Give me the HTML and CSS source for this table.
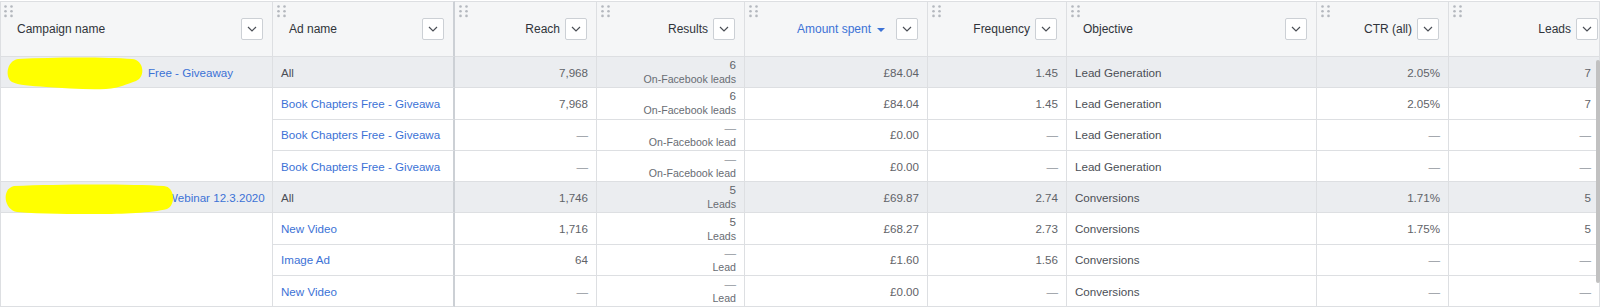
FILE: index.html
```html
<!DOCTYPE html>
<html lang="en">
<head>
<meta charset="utf-8">
<title>Ads report</title>
<link rel="stylesheet" href="styles.css">
</head>
<body>
<div class="wrap">
  <div class="grid">
    <!-- header -->
    <div class="hc left first">
      <svg class="grip" width="10" height="13" viewBox="0 0 10 13"><g fill="#b4b8be"><circle cx="1.5" cy="1.5" r="1.3"/><circle cx="7.5" cy="1.5" r="1.3"/><circle cx="1.5" cy="6.2" r="1.3"/><circle cx="7.5" cy="6.2" r="1.3"/><circle cx="1.5" cy="10.9" r="1.3"/><circle cx="7.5" cy="10.9" r="1.3"/></g></svg>
      <span class="lbl">Campaign name</span>
      <span class="dd"><svg width="10" height="6" viewBox="0 0 10 6"><path d="M1 1l4 4 4-4" fill="none" stroke="#4b4f56" stroke-width="1.2"/></svg></span>
    </div>
    <div class="hc left split">
      <svg class="grip" width="10" height="13" viewBox="0 0 10 13"><g fill="#b4b8be"><circle cx="1.5" cy="1.5" r="1.3"/><circle cx="7.5" cy="1.5" r="1.3"/><circle cx="1.5" cy="6.2" r="1.3"/><circle cx="7.5" cy="6.2" r="1.3"/><circle cx="1.5" cy="10.9" r="1.3"/><circle cx="7.5" cy="10.9" r="1.3"/></g></svg>
      <span class="lbl">Ad name</span>
      <span class="dd"><svg width="10" height="6" viewBox="0 0 10 6"><path d="M1 1l4 4 4-4" fill="none" stroke="#4b4f56" stroke-width="1.2"/></svg></span>
    </div>
    <div class="hc num">
      <svg class="grip" width="10" height="13" viewBox="0 0 10 13"><g fill="#b4b8be"><circle cx="1.5" cy="1.5" r="1.3"/><circle cx="7.5" cy="1.5" r="1.3"/><circle cx="1.5" cy="6.2" r="1.3"/><circle cx="7.5" cy="6.2" r="1.3"/><circle cx="1.5" cy="10.9" r="1.3"/><circle cx="7.5" cy="10.9" r="1.3"/></g></svg>
      <span class="lbl">Reach</span>
      <span class="dd"><svg width="10" height="6" viewBox="0 0 10 6"><path d="M1 1l4 4 4-4" fill="none" stroke="#4b4f56" stroke-width="1.2"/></svg></span>
    </div>
    <div class="hc num">
      <svg class="grip" width="10" height="13" viewBox="0 0 10 13"><g fill="#b4b8be"><circle cx="1.5" cy="1.5" r="1.3"/><circle cx="7.5" cy="1.5" r="1.3"/><circle cx="1.5" cy="6.2" r="1.3"/><circle cx="7.5" cy="6.2" r="1.3"/><circle cx="1.5" cy="10.9" r="1.3"/><circle cx="7.5" cy="10.9" r="1.3"/></g></svg>
      <span class="lbl">Results</span>
      <span class="dd"><svg width="10" height="6" viewBox="0 0 10 6"><path d="M1 1l4 4 4-4" fill="none" stroke="#4b4f56" stroke-width="1.2"/></svg></span>
    </div>
    <div class="hc num">
      <svg class="grip" width="10" height="13" viewBox="0 0 10 13"><g fill="#b4b8be"><circle cx="1.5" cy="1.5" r="1.3"/><circle cx="7.5" cy="1.5" r="1.3"/><circle cx="1.5" cy="6.2" r="1.3"/><circle cx="7.5" cy="6.2" r="1.3"/><circle cx="1.5" cy="10.9" r="1.3"/><circle cx="7.5" cy="10.9" r="1.3"/></g></svg>
      <span class="lbl sorted">Amount spent</span>
      <span class="sort-arrow"></span>
      <span class="dd"><svg width="10" height="6" viewBox="0 0 10 6"><path d="M1 1l4 4 4-4" fill="none" stroke="#4b4f56" stroke-width="1.2"/></svg></span>
    </div>
    <div class="hc num">
      <svg class="grip" width="10" height="13" viewBox="0 0 10 13"><g fill="#b4b8be"><circle cx="1.5" cy="1.5" r="1.3"/><circle cx="7.5" cy="1.5" r="1.3"/><circle cx="1.5" cy="6.2" r="1.3"/><circle cx="7.5" cy="6.2" r="1.3"/><circle cx="1.5" cy="10.9" r="1.3"/><circle cx="7.5" cy="10.9" r="1.3"/></g></svg>
      <span class="lbl">Frequency</span>
      <span class="dd"><svg width="10" height="6" viewBox="0 0 10 6"><path d="M1 1l4 4 4-4" fill="none" stroke="#4b4f56" stroke-width="1.2"/></svg></span>
    </div>
    <div class="hc left">
      <svg class="grip" width="10" height="13" viewBox="0 0 10 13"><g fill="#b4b8be"><circle cx="1.5" cy="1.5" r="1.3"/><circle cx="7.5" cy="1.5" r="1.3"/><circle cx="1.5" cy="6.2" r="1.3"/><circle cx="7.5" cy="6.2" r="1.3"/><circle cx="1.5" cy="10.9" r="1.3"/><circle cx="7.5" cy="10.9" r="1.3"/></g></svg>
      <span class="lbl">Objective</span>
      <span class="dd"><svg width="10" height="6" viewBox="0 0 10 6"><path d="M1 1l4 4 4-4" fill="none" stroke="#4b4f56" stroke-width="1.2"/></svg></span>
    </div>
    <div class="hc num">
      <svg class="grip" width="10" height="13" viewBox="0 0 10 13"><g fill="#b4b8be"><circle cx="1.5" cy="1.5" r="1.3"/><circle cx="7.5" cy="1.5" r="1.3"/><circle cx="1.5" cy="6.2" r="1.3"/><circle cx="7.5" cy="6.2" r="1.3"/><circle cx="1.5" cy="10.9" r="1.3"/><circle cx="7.5" cy="10.9" r="1.3"/></g></svg>
      <span class="lbl">CTR (all)</span>
      <span class="dd"><svg width="10" height="6" viewBox="0 0 10 6"><path d="M1 1l4 4 4-4" fill="none" stroke="#4b4f56" stroke-width="1.2"/></svg></span>
    </div>
    <div class="hc num last">
      <svg class="grip" width="10" height="13" viewBox="0 0 10 13"><g fill="#b4b8be"><circle cx="1.5" cy="1.5" r="1.3"/><circle cx="7.5" cy="1.5" r="1.3"/><circle cx="1.5" cy="6.2" r="1.3"/><circle cx="7.5" cy="6.2" r="1.3"/><circle cx="1.5" cy="10.9" r="1.3"/><circle cx="7.5" cy="10.9" r="1.3"/></g></svg>
      <span class="lbl">Leads</span>
      <span class="dd"><svg width="10" height="6" viewBox="0 0 10 6"><path d="M1 1l4 4 4-4" fill="none" stroke="#4b4f56" stroke-width="1.2"/></svg></span>
    </div>

    <!-- campaign 1 summary -->
    <div class="c g first camp camp-a">
      <span class="lk">Free - Giveaway</span>
      <svg class="blob blob-a" width="140" height="34" viewBox="0 0 140 34"><path d="M12 2C50 0 100 0 126 2C138 3 140 20 130 24C120 27 115 31 100 32C80 33 60 31 40 30C25 29 12 28 6 25C-1 21 0 4 12 2Z" fill="#ffff00"/></svg>
    </div>
    <div class="c g split">All</div>
    <div class="c g n">7,968</div>
    <div class="c g res"><span>6</span><span class="sub">On-Facebook leads</span></div>
    <div class="c g n">£84.04</div>
    <div class="c g n">1.45</div>
    <div class="c g">Lead Generation</div>
    <div class="c g n">2.05%</div>
    <div class="c g n">7</div>

    <div class="c first blank"></div>
    <div class="c split lk">Book Chapters Free - Giveawa</div>
    <div class="c n">7,968</div>
    <div class="c res"><span>6</span><span class="sub">On-Facebook leads</span></div>
    <div class="c n">£84.04</div>
    <div class="c n">1.45</div>
    <div class="c">Lead Generation</div>
    <div class="c n">2.05%</div>
    <div class="c n">7</div>

    <div class="c split lk">Book Chapters Free - Giveawa</div>
    <div class="c n dash">—</div>
    <div class="c res"><span class="dash">—</span><span class="sub">On-Facebook lead</span></div>
    <div class="c n">£0.00</div>
    <div class="c n dash">—</div>
    <div class="c">Lead Generation</div>
    <div class="c n dash">—</div>
    <div class="c n dash">—</div>

    <div class="c split lk">Book Chapters Free - Giveawa</div>
    <div class="c n dash">—</div>
    <div class="c res"><span class="dash">—</span><span class="sub">On-Facebook lead</span></div>
    <div class="c n">£0.00</div>
    <div class="c n dash">—</div>
    <div class="c">Lead Generation</div>
    <div class="c n dash">—</div>
    <div class="c n dash">—</div>

    <!-- campaign 2 summary -->
    <div class="c g first camp camp-b">
      <span class="lk">Webinar 12.3.2020</span>
      <svg class="blob blob-b" width="176" height="34" viewBox="0 0 176 34"><path d="M12 3C60 1 130 1 162 3C173 4 174 22 165 26C150 30 120 31 95 31C70 31 40 31 15 29C2 27-1 6 12 3Z" fill="#ffff00"/></svg>
    </div>
    <div class="c g split">All</div>
    <div class="c g n">1,746</div>
    <div class="c g res"><span>5</span><span class="sub">Leads</span></div>
    <div class="c g n">£69.87</div>
    <div class="c g n">2.74</div>
    <div class="c g">Conversions</div>
    <div class="c g n">1.71%</div>
    <div class="c g n">5</div>

    <div class="c first blank"></div>
    <div class="c split lk">New Video</div>
    <div class="c n">1,716</div>
    <div class="c res"><span>5</span><span class="sub">Leads</span></div>
    <div class="c n">£68.27</div>
    <div class="c n">2.73</div>
    <div class="c">Conversions</div>
    <div class="c n">1.75%</div>
    <div class="c n">5</div>

    <div class="c split lk">Image Ad</div>
    <div class="c n">64</div>
    <div class="c res"><span class="dash">—</span><span class="sub">Lead</span></div>
    <div class="c n">£1.60</div>
    <div class="c n">1.56</div>
    <div class="c">Conversions</div>
    <div class="c n dash">—</div>
    <div class="c n dash">—</div>

    <div class="c split lk">New Video</div>
    <div class="c n dash">—</div>
    <div class="c res"><span class="dash">—</span><span class="sub">Lead</span></div>
    <div class="c n">£0.00</div>
    <div class="c n dash">—</div>
    <div class="c">Conversions</div>
    <div class="c n dash">—</div>
    <div class="c n dash">—</div>
  </div>
  <div class="scroll-thumb"></div>
</div>
</body>
</html>
```

FILE: styles.css
```css
* { box-sizing: border-box; }

html, body {
  margin: 0;
  background: #ffffff;
}

body {
  padding-top: 1px;
  font-family: "Liberation Sans", Arial, sans-serif;
  font-size: 11.6px;
  color: #4b4f56;
}

.wrap {
  position: relative;
  width: 1600px;
  overflow: hidden;
}

.grid {
  display: grid;
  grid-template-columns: 273px 182px 142px 148px 183px 139px 250px 132px 151px;
  grid-template-rows: 56px repeat(8, 31.3px);
}

/* header cells */
.hc {
  position: relative;
  display: flex;
  align-items: center;
  gap: 5px;
  padding: 0 9px 0 16px;
  background: #f5f6f7;
  border-top: 1px solid #dddfe2;
  border-right: 1px solid #dddfe2;
  border-bottom: 1px solid #dddfe2;
  font-size: 12px;
  color: #30343a;
  white-space: nowrap;
}

.hc.num { justify-content: flex-end; }
.hc.left .dd { margin-left: auto; }
.hc.last { padding-right: 1px; }

.grip {
  position: absolute;
  top: 3px;
  left: 4px;
}

.first .grip { left: 3px; }

.lbl.sorted { color: #3c72d6; }

.sort-arrow {
  width: 0;
  height: 0;
  margin: 1px 6px 0 1px;
  border-left: 4px solid transparent;
  border-right: 4px solid transparent;
  border-top: 4px solid #3c72d6;
}

.dd {
  flex: none;
  width: 22px;
  height: 22px;
  display: flex;
  align-items: center;
  justify-content: center;
  background: #ffffff;
  border: 1px solid #ccd0d5;
  border-radius: 2px;
}

.first { border-left: 1px solid #dddfe2; }
.split { border-right: 2px solid #ccd0d5 !important; }

/* body cells */
.c {
  display: flex;
  align-items: center;
  padding: 0 8px;
  background: #ffffff;
  border-right: 1px solid #dddfe2;
  border-bottom: 1px solid #dddfe2;
  white-space: nowrap;
  overflow: hidden;
}

.c.g { background: #ebedf0; }
.c.n { justify-content: flex-end; color: #5f6368; }

.c.res {
  flex-direction: column;
  align-items: flex-end;
  justify-content: center;
  line-height: 14px;
  color: #5f6368;
}

.res .sub {
  font-size: 10.6px;
  color: #686c73;
}

.lk { color: #3c72d6; }
.dash { color: #90949c !important; }

.blank { grid-row: span 3; }

.camp {
  position: relative;
  overflow: visible;
}

.camp-a { padding-left: 147px; }
.camp-b { padding-left: 166px; }

.blob {
  position: absolute;
  overflow: visible;
}

.blob-a { left: 5px; top: 0; }
.blob-b { left: 1px; top: 1px; }

.scroll-thumb {
  position: absolute;
  right: 0;
  top: 59px;
  width: 4px;
  height: 223px;
  background: #c1c1c1;
  border-radius: 2px;
}
```
